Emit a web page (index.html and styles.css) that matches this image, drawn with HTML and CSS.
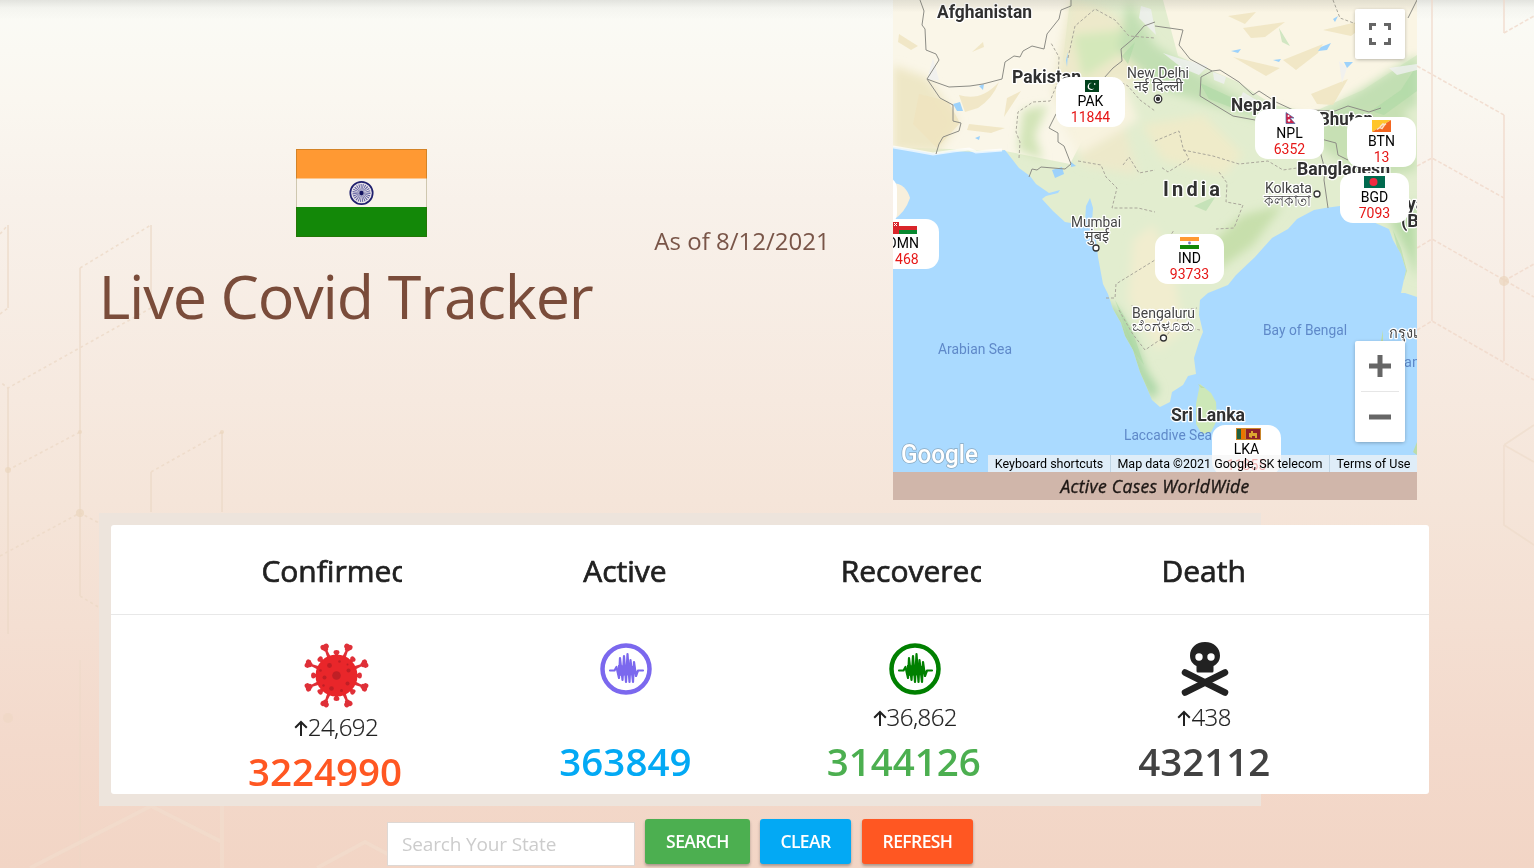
FILE: index.html
```html
<!DOCTYPE html>
<html lang="en">
<head>
<meta charset="utf-8">
<title>Live Covid Tracker</title>
<link rel="stylesheet" href="styles.css">
</head>
<body>
<svg class="backdrop" viewBox="0 0 1534 868" aria-hidden="true">
  <g fill="none" stroke="#ecd9c6" stroke-width="1.6" opacity=".75">
    <path d="M8 225V308M80 268V596M8 388V634M151 225V308M151 472V512M222 432V512"/>
    <path d="M0 234L8 225M80 268L151 225M151 308L8 388L0 382M0 314L8 308M8 470L80 432M151 472L222 432M0 556L80 513L99 523M80 596L100 608" stroke-dasharray="3 3"/>
    <path d="M80 660V868" opacity=".5"/><path d="M1504 445V525L1534 545M1504 445L1534 425M1504 445L1534 462" opacity=".7"/>
  </g>
  <g fill="none" stroke="#f0d8c9" stroke-width="1.6" opacity=".75">
    <path d="M1432 0V321M1504 0V33M1504 115V361"/>
    <path d="M1504 33L1534 16M1417 66L1504 115M1417 166L1432 158L1504 198M1417 248L1432 239L1534 297M1504 281L1534 264M1417 330L1432 321L1534 380" stroke-dasharray="4 2"/>
  </g>
  <g fill="#ebd6bd" opacity=".7"><circle cx="80" cy="513" r="4"/><circle cx="8" cy="470" r="3"/><circle cx="8" cy="718" r="5" opacity=".5"/><circle cx="80" cy="432" r="2"/><circle cx="222" cy="432" r="2"/><circle cx="1504" cy="281" r="5"/></g>
  <g fill="none" stroke="#f2e0cf" stroke-width="4" opacity=".5"><path d="M30 868L151 806L222 842V868M317 868L365 842L395 858M222 806V868"/></g>
</svg>
<main class="page">
  <section class="hero">
    <div class="brand">
      <svg class="flag" viewBox="0 0 131 88">
        <rect width="131" height="88" fill="#f9f3ea"/><rect width="131" height="29.5" fill="#ff9933"/><rect y="58" width="131" height="30" fill="#138808"/>
        <circle cx="65.500" cy="44" r="11.200" fill="#e9e4ea" stroke="#20206e" stroke-width="1.700"/>
        <circle cx="65.500" cy="44" r="5.500" fill="none" stroke="#5b5b9d" stroke-width="7" stroke-dasharray=".7 .75"/><circle cx="65.500" cy="44" r="2.200" fill="#11115f"/>
        <rect x=".5" y=".5" width="130" height="87" fill="none" stroke="#554400" stroke-opacity=".25"/>
      </svg>
      <h1 class="title">Live Covid Tracker</h1>
    </div>
    <p class="date">As of 8/12/2021</p>
    <figure class="world">
      <div class="map">
        <svg class="terrain" viewBox="0 0 524 472">
          <defs>
            <filter id="soft"><feGaussianBlur stdDeviation="5"/></filter>
            <filter id="fine"><feGaussianBlur stdDeviation=".7"/></filter>
            <clipPath id="land"><path id="coast" d="M0 0H524V297L512 293L508 293L513 270L508 254L500 240L496 229L480 222L470 222L455 215L447 206L432 208L421 210L404 219L395 229L379 238L370 248L362 257L343 275L335 285L315 293L307 300L306 315L310 332L306 342L301 358L303 374L295 376L290 385L279 392L277 402L267 407L259 400L254 388L247 372L240 350L232 336L228 323L220 309L215 294L210 284L205 257L203 240L199 222L200 208L197 198L193 206L192 222L184 224L172 222L160 211L149 199L153 196L165 193L167 190L156 193L143 184L137 176L126 168L119 159L112 150L83 152L60 151L43 154L20 150L0 147Z"/></clipPath>
          </defs>
          <rect width="524" height="472" fill="#aadaff"/>
          <g clip-path="url(#land)">
            <rect width="524" height="472" fill="#e2edcf"/>
            <path d="M0 0H177L170 60L200 120L177 164L112 151L0 147Z" fill="#faf6e8"/>
            <path d="M270 0H524V55L470 90L420 112L380 105L345 82L285 56Z" fill="#faf5e4"/>
            <g filter="url(#soft)">
              <path d="M0 65L35 78L66 122L45 152L0 150Z" fill="#eee7c6"/>
              <path d="M177 0L215 10L270 60L235 85L232 130L245 175L190 165L175 130L160 90Z" fill="#ede9ca"/>
              <path d="M180 35L230 30L225 55L190 78Z" fill="#d4e8ba"/>
              <path d="M130 110L155 105L142 135L150 160L125 150Z" fill="#d2e4b7"/>
              <path d="M170 110L230 80L245 120L185 155Z" fill="#f8f3df"/>
              <path d="M235 0L262 45L320 83L350 100L420 120L524 55V105L470 125L370 120L270 90L225 50Z" fill="#c2dfb3"/>
              <path d="M418 128L510 100L524 170L480 180L430 150Z" fill="#c7e0b4"/>
              <path d="M208 300L225 310L240 335L253 370L266 390L258 400L240 370L215 315Z" fill="#a9d6a4"/>
              <path d="M240 240L260 225L280 265L290 330L265 350L235 300Z" fill="#f1edcf"/>
              <path d="M310 250L350 215L390 205L360 245L325 270Z" fill="#c7dfac"/>
              <path d="M250 125L310 115L350 155L330 175L270 160Z" fill="#efebc9"/>
              <path d="M496 220L524 200V280L515 255Z" fill="#b9dca9"/>
            </g>
            <g filter="url(#fine)" opacity=".8">
              <g fill="#efe4bf"><path d="M6 34L25 46L18 50L5 42ZM66 95Q88 102 106 82Q100 98 85 108L72 112ZM114 98L111 117L128 91ZM76 124L112 128L98 133L74 130ZM90 42L79 52L91 47ZM26 94L55 101L67 123L44 148L20 124ZM350 28L392 22L372 37L358 38ZM390 60L430 44L425 53L403 70ZM418 94L455 79L440 105L424 104ZM335 16L363 12L352 24ZM430 30L481 18L458 36ZM340 57L387 68L373 76Z"/></g>
              <g fill="#a9d9a2" opacity=".65"><path d="M307 83L355 105L348 111L316 99ZM229 56L242 42L235 64ZM478 111L508 90L524 65V91L491 115ZM386 28L397 46L389 42ZM301 206L323 196L313 211ZM500 230L508 248L514 271L511 280L507 260ZM222 300L239 330L251 365L240 350Z"/></g>
              <path d="M34 80L40 58L46 80ZM248 6L258 9L263 35L246 18ZM270 53L285 58L315 66L306 75L289 68ZM320 72L333 77L331 84L321 80ZM350 92L365 101L360 106L347 99ZM496 68L524 64V70L504 75ZM446 61L454 68L449 83Z" fill="#eff0f1"/>
            </g>
            <g fill="#9dd2fb"><path d="M60 104L67 102L70 111L64 111ZM86 86L91 84L90 90ZM159 170L169 167L171 174L162 178ZM173 60L175 52L174 67ZM82 138L87 136L86 140ZM178 162L183 166L178 167ZM380 60L388 59L386 62ZM428 47L438 43L434 50L425 51ZM451 62L460 62L454 68ZM338 51L348 49L345 53ZM440 19L445 16L442 22Z"/></g>
          </g>
          <path d="M0 183Q13 184 17 198Q12 213 0 220Z" fill="#f7efdc"/><path d="M0 147L18 150L40 154L60 151L76 149L83 152L109 150" fill="none" stroke="#fff" stroke-width="3" opacity=".7"/>
          <path d="M307 384L318 393L323 402L324 420L318 432L309 434L303 424L303 404Z" fill="#cde8b8"/>
          <path d="M305 384L312 388L308 388ZM488 341L490 330V341ZM520 452L524 442V455Z" fill="#bddca9"/>
          <g fill="none" stroke="#8c8c85" stroke-width="1">
            <path d="M27 0L31 11L29 25L32 29L33 50L43 54L46 60L34 79L42 82L56 87L77 86L90 84L109 79L112 62L121 56L127 57L130 51L139 46L151 49L154 34L166 19L168 10L178 6L178 0"/>
            <path d="M34 79L47 98L60 105L60 121L68 123L66 131L50 137L46 144L43 154M136 177L139 169L144 170L148 167L172 169L178 164L171 146L165 142L165 133L156 128L163 114L178 96L211 78L220 68L229 61L228 49L240 39L251 26L262 22"/>
            <path d="M319 71L327 70L346 82L360 95L366 91L383 102L398 109L415 117M262 26L290 30L286 45L297 59L319 71L308 77L307 96L340 116L362 120M418 110L442 111L455 106L476 112L488 108M428 139L443 143L445 155L455 160M427 151L432 170L431 180L435 208M524 0L515 18"/>
          </g>
          <g fill="none" stroke="#aaa79b" stroke-width="1" stroke-dasharray="3 2">
            <path d="M126 158L127 142L123 132L125 112L140 102L157 101L165 82L166 57L158 43M175 58L182 26L202 9L222 20L236 36L262 38M220 78L235 86L247 100L262 111M185 161L208 165L213 177L224 188L219 208L245 208L262 212M230 165L236 157L246 173L262 170"/>
            <path d="M262 141L286 131L290 148L296 159L275 172L268 167M290 150L320 156L346 164L375 161L390 170L425 165M326 172L334 183L333 202L350 205L341 228L323 229M213 298L222 298L223 284L262 260L281 230M226 310L239 333L252 350L274 335L282 325L307 330M246 316L238 304M282 325L290 310L304 308M440 0L447 18L466 25L485 28"/>
          </g>
          <g class="country">
            <text x="44" y="18" textLength="95" lengthAdjust="spacingAndGlyphs">Afghanistan</text>
            <text x="119" y="83" textLength="69" lengthAdjust="spacingAndGlyphs">Pakistan</text>
            <text x="338" y="111" textLength="45" lengthAdjust="spacingAndGlyphs">Nepal</text>
            <text x="426" y="125" textLength="54" lengthAdjust="spacingAndGlyphs">Bhutan</text>
            <text x="404" y="175" textLength="93" lengthAdjust="spacingAndGlyphs">Bangladesh</text>
            <text class="india" x="270" y="196" textLength="57">India</text>
            <text x="278" y="421" textLength="74" lengthAdjust="spacingAndGlyphs">Sri Lanka</text>
            <text x="498" y="210">Myanmar</text><text x="508" y="227">(Burma)</text>
          </g>
          <g class="city">
            <text x="234" y="77.500" textLength="62" lengthAdjust="spacingAndGlyphs">New Delhi</text><text x="241" y="91" textLength="49" lengthAdjust="spacingAndGlyphs">नई दिल्ली</text>
            <text x="372" y="193" textLength="47" lengthAdjust="spacingAndGlyphs">Kolkata</text><text x="371" y="206" textLength="47" lengthAdjust="spacingAndGlyphs">কলকাতা</text>
            <text x="178" y="227" textLength="50" lengthAdjust="spacingAndGlyphs">Mumbai</text><text x="192" y="241" textLength="24" lengthAdjust="spacingAndGlyphs">मुंबई</text>
            <text x="239" y="317.500" textLength="63" lengthAdjust="spacingAndGlyphs">Bengaluru</text><text x="239" y="331" textLength="63" lengthAdjust="spacingAndGlyphs">ಬೆಂಗಳೂರು</text>
            <text x="496" y="338">กรุงเทพ</text>
          </g>
          <g fill="#fff" stroke="#333" stroke-width="1.300"><circle cx="265" cy="99" r="3.800"/><circle cx="265" cy="99" r="1.500" fill="#333"/><circle cx="424" cy="194" r="3"/><circle cx="203" cy="248" r="3"/><circle cx="270.500" cy="338" r="3"/></g>
          <g class="sea">
            <text x="45" y="353.500" textLength="74" lengthAdjust="spacingAndGlyphs">Arabian Sea</text>
            <text x="370" y="334.500" textLength="84" lengthAdjust="spacingAndGlyphs">Bay of Bengal</text>
            <text x="231" y="439.500" textLength="88" lengthAdjust="spacingAndGlyphs">Laccadive Sea</text>
            <text x="511" y="367">an Sea</text>
          </g>
          <text class="google" x="8" y="463" textLength="77" lengthAdjust="spacingAndGlyphs">Google</text>
        </svg>
        <div class="marker blank"></div>
        <div class="marker omn"><svg viewBox="0 0 25 12"><path fill="#fff" d="M0 0h25v4H0z"/><path fill="#d9252a" d="M0 0h7v12H0zM0 4h25v4H0z"/><path fill="#078930" d="M7 8h18v4H7z"/><path stroke="#fff" d="M2 1l3 3m0-3L2 4"/></svg><b>OMN</b><i>1468</i></div>
        <div class="marker pak"><svg class="wide14" viewBox="0 0 14 12"><path fill="#01411c" d="M0 0h14v12H0z"/><path d="M9.500 7.500A3.500 3.500 0 1 1 7 3a3 3 0 1 0 2.500 4.500zM9 3l2 1-2 1z" fill="#fff"/></svg><b>PAK</b><i>11844</i></div>
        <div class="marker npl"><svg class="wide14" viewBox="0 0 14 12"><path fill="#cf2347" stroke="#4568a8" stroke-width=".700" d="M2 .5L10 6H6l5 5.500H2z"/><circle cx="4.500" cy="4" r="1" fill="#fff"/><circle cx="5" cy="8.500" r="1.300" fill="#fff"/></svg><b>NPL</b><i>6352</i></div>
        <div class="marker btn"><svg class="wide19" viewBox="0 0 19 12"><path fill="#ffc52b" d="M0 0h19L0 12z"/><path fill="#f36620" d="M19 0v12H0z"/><path d="M5 9.500l3-2 2 1 2-3 2-2M8 7l3-3 2 1" stroke="#fbe3c8" fill="none" stroke-width="1.500"/></svg><b>BTN</b><i>13</i></div>
        <div class="marker bgd"><svg class="wide21" viewBox="0 0 21 12"><path fill="#006a4e" d="M0 0h21v12H0z"/><circle cx="9.500" cy="6" r="4" fill="#f42a41"/></svg><b>BGD</b><i>7093</i></div>
        <div class="marker ind"><svg class="wide19" viewBox="0 0 19 12"><path fill="#ff9933" d="M0 0h19v4H0z"/><path fill="#fff" d="M0 4h19v4H0z"/><path fill="#138808" d="M0 8h19v4H0z"/><circle cx="9.500" cy="6" r="1.400" fill="#7777bb"/></svg><b>IND</b><i>93733</i></div>
        <div class="marker lka"><svg viewBox="0 0 25 12"><path fill="#c9862c" d="M0 0h25v12H0z"/><path fill="#21613f" d="M1 1h4v10H1z"/><path fill="#eb7400" d="M5 1h4v10H5z"/><path fill="#8d2029" d="M10 1h14v10H10z"/><path fill="#dba630" d="M13 9V5h2V3h2v2h4v5h-2V8h-3v2z"/></svg><b>LKA</b><i>11855</i></div>
        <button class="fullscreen" aria-label="Toggle fullscreen view"><svg viewBox="0 0 22 22"><path d="M1.500 7V1.500H7M15 1.500h5.500V7M20.500 15v5.500H15M7 20.500H1.500V15" fill="none" stroke="#666" stroke-width="3"/></svg></button>
        <div class="zoom"><svg viewBox="0 0 22 22"><path d="M0 11h22M11 0v22" stroke="#666" stroke-width="5"/></svg><hr><svg viewBox="0 0 22 22"><path d="M0 11h22" stroke="#666" stroke-width="5"/></svg></div>
        <div class="legal"><span class="k">Keyboard shortcuts</span><span class="m">Map data ©2021 Google, SK telecom</span><span class="t">Terms of Use</span></div>
      </div>
      <figcaption><span>Active Cases WorldWide</span></figcaption>
    </figure>
  </section>

  <section class="stats-frame">
    <div class="stats">
      <div class="heads">
        <div class="cell"><h2>Confirmed</h2></div><div class="cell"><h2>Active</h2></div><div class="cell"><h2>Recovered</h2></div><div class="cell"><h2>Death</h2></div>
      </div>
      <div class="values">
        <div class="cell confirmed">
          <svg class="virus" viewBox="-32.500 -31.500 65 63">
            <defs><g id="spike" fill="#df3038"><path d="M-1.900 -18L-1 -29H1L1.900 -18Z"/><circle cx="-1.700" cy="-31" r="2.600"/><circle cx="1.700" cy="-31" r="2.600"/><circle cy="-29" r="2.700"/></g><g id="bud" fill="#df3038"><path d="M-1.700 -19h3.400v-3h-3.400z"/><ellipse cy="-23.200" rx="2.900" ry="2.200"/></g></defs>
            <use href="#spike" transform="rotate(22.500)"/><use href="#spike" transform="rotate(67.500)"/><use href="#spike" transform="rotate(112.500)"/><use href="#spike" transform="rotate(157.500)"/><use href="#spike" transform="rotate(202.500)"/><use href="#spike" transform="rotate(247.500)"/><use href="#spike" transform="rotate(292.500)"/><use href="#spike" transform="rotate(337.500)"/>
            <use href="#bud"/><use href="#bud" transform="rotate(45)"/><use href="#bud" transform="rotate(90)"/><use href="#bud" transform="rotate(135)"/><use href="#bud" transform="rotate(180)"/><use href="#bud" transform="rotate(225)"/><use href="#bud" transform="rotate(270)"/><use href="#bud" transform="rotate(315)"/>
            <circle r="21" fill="#e9262a"/><g fill="#c01f25"><circle r="4.300"/><circle cx="-7" cy="-10" r="2.400"/><circle cx="12" cy="-5" r="2"/><circle cx="11" cy="8" r="2"/><circle cx="-5" cy="13" r="2.300"/><circle cx="-12" cy="2" r="2"/><circle cx="-16" cy="-5" r="1.300"/><circle cx="3" cy="-14" r="1.300"/><circle cx="5" cy="15" r="1.500"/><circle cx="-13" cy="10" r="1.200"/><circle cx="11" cy="-11" r="1"/></g>
          </svg>
          <p class="delta"><svg viewBox="0 0 14 17"><path d="M7 16V2M1.200 7.800L7 2l5.800 5.800" fill="none" stroke="currentColor" stroke-width="2"/></svg>24,692</p><p class="total long">3224990</p>
        </div>
        <div class="cell active">
          <svg class="pulse" viewBox="0 0 52 52"><circle cx="26" cy="26" r="23.500" fill="none" stroke="currentColor" stroke-width="4.500"/><path d="M10 27.500h4.500l2-3.500 2.500 11 1-20 2.500 22 1.500-24 2 26 1.500-28 2 28 1-22 2.500 22 1-20L36 33l2-5.500h5" fill="none" stroke="currentColor" stroke-width="2.200" stroke-linejoin="round" stroke-linecap="round"/><path d="M18 22l16 1v9l-16 1z" fill="currentColor"/></svg>
          <p class="delta"></p><p class="total">363849</p>
        </div>
        <div class="cell recovered">
          <svg class="pulse" viewBox="0 0 52 52"><circle cx="26" cy="26" r="23.500" fill="none" stroke="currentColor" stroke-width="4.500"/><path d="M10 27.500h4.500l2-3.500 2.500 11 1-20 2.500 22 1.500-24 2 26 1.500-28 2 28 1-22 2.500 22 1-20L36 33l2-5.500h5" fill="none" stroke="currentColor" stroke-width="2.200" stroke-linejoin="round" stroke-linecap="round"/><path d="M18 22l16 1v9l-16 1z" fill="currentColor"/></svg>
          <p class="delta"><svg viewBox="0 0 14 17"><path d="M7 16V2M1.200 7.800L7 2l5.800 5.800" fill="none" stroke="currentColor" stroke-width="2"/></svg>36,862</p><p class="total long">3144126</p>
        </div>
        <div class="cell death">
          <svg class="skull" viewBox="0 0 48 54"><path d="M24 0C15 0 9 6 9 13.500c0 5 2.500 8.500 6.500 10.500v5q0 1.500 1.500 1.500h14q1.500 0 1.500-1.500v-5c4-2 6.500-5.500 6.500-10.500C39 6 33 0 24 0z" fill="#222"/><circle cx="18" cy="15" r="3.700" fill="#fff"/><circle cx="30" cy="15" r="3.700" fill="#fff"/><path d="M4 30.500L44 50.500M44 30.500L4 50.500" stroke="#222" stroke-width="6.500" stroke-linecap="round"/></svg>
          <p class="delta"><svg viewBox="0 0 14 17"><path d="M7 16V2M1.200 7.800L7 2l5.800 5.800" fill="none" stroke="currentColor" stroke-width="2"/></svg>438</p><p class="total">432112</p>
        </div>
      </div>
    </div>
  </section>

  <form class="search">
    <input type="text" placeholder="Search Your State">
    <button type="button" class="go">SEARCH</button><button type="button" class="clear">CLEAR</button><button type="button" class="refresh">REFRESH</button>
  </form>
</main>
</body>
</html>
```
FILE: styles.css
```css
* { box-sizing: border-box; }
html { height: 100%; overflow: hidden; }
body {
  margin: 0;
  height: 868px;
  overflow: hidden;
  font-family: "Open Sans", "Noto Sans", sans-serif;
  color: #212121;
  background: linear-gradient(rgba(90,90,85,.15), rgba(90,90,85,.04) 8px, transparent 20px),
    linear-gradient(#fafbf6, #faf7f0 100px, #f8f1ea 200px, #f6e9df 400px, #f5e5d9 500px, #f3d9cb 750px, #f2d5c5 868px);
}
h1, h2, p, figure { margin: 0; font-weight: 400; }
.backdrop { position: absolute; inset: 0; width: 1534px; height: 868px; }
.page { position: relative; padding-left: 99px; }

.hero { display: flex; height: 500px; }
.brand { width: 524px; padding-top: 149px; display: flex; flex-direction: column; align-items: center; }
.flag { width: 131px; height: 88px; }
.title { margin-top: 17px; margin-left: -31px; height: 84px; line-height: 84px; font-size: 61px; letter-spacing: -1.15px; color: #7a4c3a; white-space: nowrap; }
.date { width: 238px; padding-top: 223px; text-align: center; font-size: 24px; line-height: 36px; letter-spacing: 0; color: #795548; }
.world { width: 524px; margin-left: 32px; }
.map { position: relative; width: 524px; height: 472px; overflow: hidden; }
.map::after { content: ""; position: absolute; inset: 0 0 auto; height: 12px; background: linear-gradient(rgba(90,90,85,.15), transparent); }
.terrain { display: block; width: 524px; height: 472px; }
.terrain text { font-family: Roboto, "Noto Sans", sans-serif; paint-order: stroke; stroke: #fff; stroke-width: 2.5px; stroke-linejoin: round; }
.country text { font-size: 18px; font-weight: 700; fill: #303030; }
.terrain .india { font-size: 20px; }
.city text { font-size: 14.5px; fill: #444; }
.terrain .sea text { font-size: 14.5px; fill: #5f89c9; stroke: none; }
.terrain .google { font: 500 25px Roboto, sans-serif; fill: #fff; stroke: #8aa9c0; stroke-width: 1.5px; }
figcaption { height: 28px; line-height: 29px; background: #d0b6aa; text-align: center; font-style: italic; font-size: 17.5px; letter-spacing: .32px; color: #1d1714; -webkit-text-stroke: .35px; }

.marker { position: absolute; width: 69px; height: 50px; padding-top: 3px; border-radius: 13px; background: #fff; display: flex; flex-direction: column; align-items: center; font: 14px/16px Roboto, sans-serif; color: #000; }
.marker svg { width: 25px; height: 12px; margin-left: 3px; }
.marker svg.wide14 { width: 14px; }
.marker svg.wide19 { width: 19px; margin-left: 0; }
.marker svg.wide21 { width: 21px; margin-left: 0; }
.marker b { font-weight: 400; margin-top: 1px; }
.marker i { font-style: normal; color: #e61717; }
.blank { left: -65px; top: 176px; }
.omn { left: -23px; top: 219px; padding-right: 3px; }
.pak { left: 163px; top: 77px; }
.npl { left: 362px; top: 109px; }
.btn { left: 454px; top: 117px; }
.bgd { left: 447px; top: 173px; }
.ind { left: 262px; top: 234px; }
.lka { left: 319px; top: 425px; }
.fullscreen, .zoom { position: absolute; left: 462px; width: 50px; background: #fff; border: 0; border-radius: 2px; box-shadow: 0 1px 4px -1px rgba(0,0,0,.4); }
.fullscreen { top: 9px; height: 50px; padding: 14px; z-index: 2; }
.fullscreen svg { display: block; width: 22px; height: 22px; }
.zoom { top: 341px; height: 101px; display: flex; flex-direction: column; align-items: center; justify-content: space-between; padding: 14px 0; }
.zoom svg { width: 22px; height: 22px; }
.zoom hr { width: 38px; height: 1px; margin: 0; border: 0; background: #e6e6e6; }
.legal { position: absolute; right: 0; bottom: 0; height: 17px; display: flex; font: 12.5px/17px Roboto, sans-serif; color: #000; white-space: nowrap; }
.legal span { background: rgba(245,245,245,.7); text-align: center; }
.legal span + span { border-left: 1px solid #bfd5e5; }
.k { width: 122px; }
.m { width: 219px; }
.t { width: 88px; }

.stats-frame { width: 1162px; height: 293px; margin-top: 13px; padding: 12px; background: #ede4dc; }
.stats { width: 1318px; height: 269px; background: #fff; border-radius: 3px; }
.heads, .values { display: grid; grid-template-columns: repeat(4, 176px); column-gap: 113.4px; padding-left: 115px; }
.heads { height: 90px; border-bottom: 1px solid #e8e8e8; }
.values { height: 179px; }
.cell { overflow: hidden; padding-left: 44px; display: flex; flex-direction: column; align-items: center; white-space: nowrap; }
h2 { margin-top: 25px; margin-left: -1px; font-size: 30px; line-height: 42px; -webkit-text-stroke: .7px; }
.values .cell { padding-top: 27px; }
.virus { width: 65px; height: 63px; margin-top: 2px; }
.pulse { width: 52px; height: 52px; margin-top: 1px; }
.skull { width: 48px; height: 54px; margin-left: 1px; }
.virus, .pulse, .skull { flex: none; overflow: visible; }
.delta { display: flex; align-items: center; height: 34px; margin-top: 4px; font-size: 24px; font-weight: 300; line-height: 34px; letter-spacing: -.55px; -webkit-text-stroke: .2px; }
.pulse + .delta { margin-top: 5px; }
.confirmed .delta { margin-top: 3px; }
.delta svg { width: 14px; height: 17px; margin-top: 3px; }
.total { height: 46px; margin-top: 4px; font-size: 38.5px; line-height: 46px; font-weight: 600; }
.long { margin-left: -22px; }
.active .pulse { color: #7b68ee; margin-left: 1px; }
.recovered .pulse { color: #008000; }
.confirmed .total { color: #ff5722; }
.active .total { color: #03a9f4; }
.recovered .total { color: #4caf50; }
.death .total { color: #424242; }

.search { display: flex; margin: 13px 0 0 288px; }
.search input { width: 248px; height: 44px; margin: 3px 10px 0 0; padding: 0 14px; border: 1px solid #ded8d4; background: #fff; font: 19px "Open Sans", sans-serif; letter-spacing: -.15px; }
.search input::placeholder { color: #ccc; opacity: 1; }
.search button { height: 45px; padding: 0 0 2px; border: 0; border-radius: 3px; color: #fff; font: 600 17.5px "Open Sans", sans-serif; letter-spacing: -.6px; box-shadow: 0 2px 3px rgba(0,0,0,.3); }
.search .go { width: 105px; background: #4caf50; }
.search .clear { width: 91px; margin-left: 10px; background: #03a9f4; }
.search .refresh { width: 111px; margin-left: 11px; background: #ff5722; }
```
